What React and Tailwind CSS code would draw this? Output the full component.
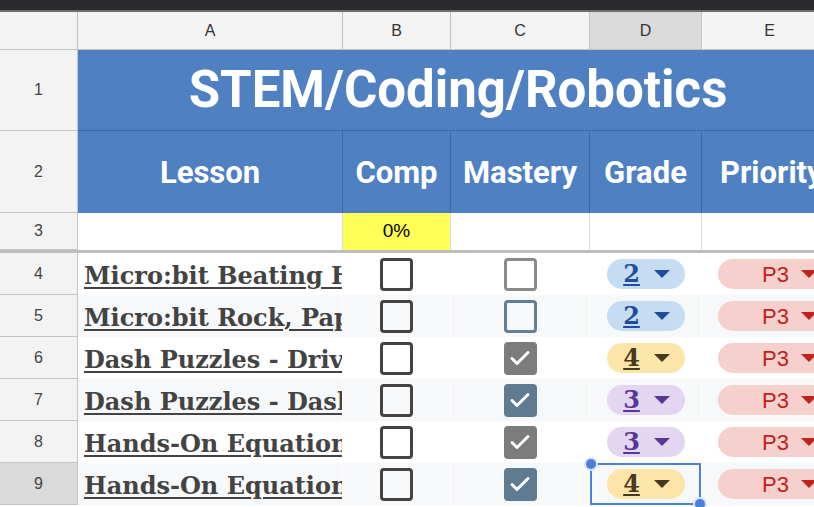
import React from 'react';

const COLS = [
  { key: 'A', w: 'w-[265px]' },
  { key: 'B', w: 'w-[108px]' },
  { key: 'C', w: 'w-[139px]' },
  { key: 'D', w: 'w-[112px]' },
  { key: 'E', w: 'w-[136px]' },
];

const rows = [
  { n: 4, lesson: 'Micro:bit Beating Heart', mastery: 'gray', grade: 2, band: false },
  { n: 5, lesson: 'Micro:bit Rock, Paper, Scissors', mastery: 'blue', grade: 2, band: true },
  { n: 6, lesson: 'Dash Puzzles - Drive', mastery: 'grayChecked', grade: 4, band: false },
  { n: 7, lesson: 'Dash Puzzles - Dash', mastery: 'blueChecked', grade: 3, band: true },
  { n: 8, lesson: 'Hands-On Equations 1', mastery: 'grayChecked', grade: 3, band: false },
  { n: 9, lesson: 'Hands-On Equations 2', mastery: 'blueChecked', grade: 4, band: true, selected: true },
];

const gradeStyles = {
  2: { chip: 'bg-[#c6dcf2]', text: 'text-[#1f4e9c]', tri: 'fill-[#1f4e9c]' },
  3: { chip: 'bg-[#e3d6f1]', text: 'text-[#5a3795]', tri: 'fill-[#5a3795]' },
  4: { chip: 'bg-[#fce5a8]', text: 'text-[#473822]', tri: 'fill-[#473822]' },
};

const Triangle = ({ className }) => (
  <svg width="16" height="8" viewBox="0 0 16 8" className={className}>
    <path d="M0 0 L16 0 L8 8 Z" />
  </svg>
);

const Checkbox = ({ variant }) => {
  if (variant === 'grayChecked' || variant === 'blueChecked') {
    const bg = variant === 'grayChecked' ? 'bg-[#7c7c7c]' : 'bg-[#5f7b92]';
    return (
      <div className={`w-[33px] h-[33px] rounded-[4px] ${bg} flex items-center justify-center`}>
        <svg width="24" height="24" viewBox="0 0 24 24" fill="none" stroke="white" strokeWidth="3" strokeLinecap="round" strokeLinejoin="round">
          <path d="M4 12.5l5 5L20 6.5" />
        </svg>
      </div>
    );
  }
  const border =
    variant === 'gray' ? 'border-[#8a8a8a]' : variant === 'blue' ? 'border-[#637f96]' : 'border-[#434343]';
  return <div className={`w-[33px] h-[33px] rounded-[4px] border-[3px] ${border}`} />;
};

const RowHead = ({ children, h, dark }) => (
  <div
    className={`w-[78px] shrink-0 ${h} ${dark ? 'bg-[#dadada]' : 'bg-[#f3f3f3]'} border-r border-b border-[#c4c4c4] flex items-center justify-center text-[16px] text-[#444] font-['Liberation_Sans',sans-serif]`}
  >
    {children}
  </div>
);

export default function App() {
  return (
    <div className="w-[814px] h-[507px] overflow-hidden bg-white relative">
      <div className="h-[10px] bg-[#2a2a2e]" />
      <div className="h-[2px] bg-[#6e6e6e]" />

      {/* column letters */}
      <div className="flex h-[38px]">
        <RowHead h="h-[38px]" />
        {COLS.map((c) => (
          <div
            key={c.key}
            className={`${c.w} shrink-0 border-r border-b border-[#c4c4c4] flex items-center justify-center text-[16px] text-[#333] font-['Liberation_Sans',sans-serif] ${c.key === 'D' ? 'bg-[#dadada]' : 'bg-[#f3f3f3]'}`}
          >
            {c.key}
          </div>
        ))}
      </div>

      {/* title row */}
      <div className="flex h-[81px]">
        <RowHead h="h-[81px]">1</RowHead>
        <div className="w-[760px] shrink-0 bg-[#4f81c2] border-b border-[#3f6aa5] flex items-center justify-center text-white font-bold text-[51px] font-['Roboto',sans-serif]">
          STEM/Coding/Robotics
        </div>
      </div>

      {/* header row */}
      <div className="flex h-[82px]">
        <RowHead h="h-[82px]">2</RowHead>
        {['Lesson', 'Comp', 'Mastery', 'Grade', 'Priority'].map((t, i) => (
          <div
            key={t}
            className={`${COLS[i].w} shrink-0 bg-[#4f81c2] border-r border-[#3f6aa5] flex items-center pt-[2px] ${i === 4 ? 'pl-[18px]' : 'justify-center'} text-white font-bold text-[31px] font-['Roboto',sans-serif] whitespace-nowrap overflow-hidden`}
          >
            {t}
          </div>
        ))}
      </div>

      {/* row 3 */}
      <div className="flex h-[37px]">
        <RowHead h="h-[37px]">3</RowHead>
        {COLS.map((c) => (
          <div
            key={c.key}
            className={`${c.w} shrink-0 border-r border-[#dedede] flex items-center justify-center text-[19px] text-black font-['Liberation_Sans',sans-serif] ${c.key === 'B' ? 'bg-[#ffff55]' : 'bg-white'}`}
          >
            {c.key === 'B' ? '0%' : ''}
          </div>
        ))}
      </div>
      <div className="h-[3px] bg-[#bdbdbd]" />

      {rows.map((r) => {
        const g = gradeStyles[r.grade];
        const band = r.band ? 'bg-[#f7f8fa]' : 'bg-white';
        return (
          <div key={r.n} className="flex h-[42px]">
            <RowHead h="h-[42px]" dark={r.selected}>
              {r.n}
            </RowHead>
            <div className={`w-[265px] shrink-0 ${band} border-r border-white overflow-hidden whitespace-nowrap pl-[6px] pt-[3px] flex items-center`}>
              <span className="text-[24px] font-bold underline decoration-[2px] underline-offset-[3px] text-[#434343] font-['DejaVu_Serif',serif]">
                {r.lesson}
              </span>
            </div>
            <div className={`w-[108px] shrink-0 ${band} border-r border-white flex items-center justify-center`}>
              <Checkbox variant="plain" />
            </div>
            <div className={`w-[139px] shrink-0 ${band} border-r border-white flex items-center justify-center`}>
              <Checkbox variant={r.mastery} />
            </div>
            <div className={`w-[112px] shrink-0 ${band} border-r border-white flex items-center justify-center relative`}>
              <div className={`w-[78px] h-[30px] rounded-full ${g.chip} flex items-center justify-center gap-[14px] pl-[2px]`}>
                <span className={`text-[24px] leading-none font-bold underline decoration-[2px] underline-offset-[2px] font-['DejaVu_Serif',serif] ${g.text}`}>
                  {r.grade}
                </span>
                <Triangle className={g.tri} />
              </div>
              {r.selected && (
                <div className="absolute inset-0 border-2 border-[#4a7fda]">
                  <div className="absolute -left-[6px] -top-[6px] w-[10px] h-[10px] rounded-full bg-[#4a7fda] ring-2 ring-[#d8e4f8]" />
                  <div className="absolute -right-[6px] -bottom-[6px] w-[10px] h-[10px] rounded-full bg-[#4a7fda] ring-2 ring-[#d8e4f8]" />
                </div>
              )}
            </div>
            <div className={`w-[136px] shrink-0 ${band} flex items-center pl-[16px]`}>
              <div className="w-[116px] shrink-0 h-[30px] rounded-full bg-[#f6d0cd] flex items-center gap-[12px] pl-[44px]">
                <span className="text-[22px] text-[#c0221c] font-['Liberation_Sans',sans-serif]">P3</span>
                <Triangle className="fill-[#c0221c]" />
              </div>
            </div>
          </div>
        );
      })}
    </div>
  );
}
